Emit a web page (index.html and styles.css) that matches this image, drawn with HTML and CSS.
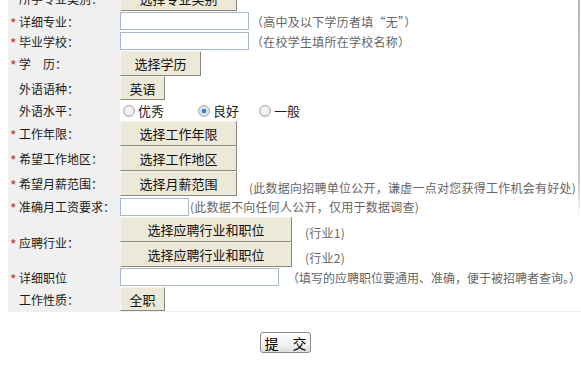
FILE: index.html
```html
<!DOCTYPE html>
<html lang="zh-CN">
<head>
  <meta charset="UTF-8">
  <title>求职意向</title>
  <link rel="stylesheet" href="styles.css">
</head>
<body>
  <div class="form">
    <div class="row h25">
      <div class="label"><span class="req">*</span>所学专业类别：</div>
      <div class="field"><button class="btn w117">选择专业类别</button></div>
    </div>
    <div class="row h20">
      <div class="label"><span class="req">*</span>详细专业：</div>
      <div class="field"><input type="text" class="txt w129"><span class="note">（高中及以下学历者填“无”）</span></div>
    </div>
    <div class="row h20">
      <div class="label"><span class="req">*</span>毕业学校：</div>
      <div class="field"><input type="text" class="txt w129"><span class="note">（在校学生填所在学校名称）</span></div>
    </div>
    <div class="row h25">
      <div class="label"><span class="req">*</span>学　历：</div>
      <div class="field"><button class="btn w81">选择学历</button></div>
    </div>
    <div class="row h24">
      <div class="label"><span class="req"></span>外语语种：</div>
      <div class="field"><button class="btn w45">英语</button></div>
    </div>
    <div class="row h21">
      <div class="label"><span class="req"></span>外语水平：</div>
      <div class="field radios">
        <label class="opt"><input type="radio" name="lv">优秀</label>
        <label class="opt"><input type="radio" name="lv" checked>良好</label>
        <label class="opt"><input type="radio" name="lv">一般</label>
      </div>
    </div>
    <div class="row h25">
      <div class="label"><span class="req">*</span>工作年限：</div>
      <div class="field"><button class="btn w117">选择工作年限</button></div>
    </div>
    <div class="row h25">
      <div class="label"><span class="req">*</span>希望工作地区：</div>
      <div class="field"><button class="btn w117">选择工作地区</button></div>
    </div>
    <div class="row h25">
      <div class="label"><span class="req">*</span>希望月薪范围：</div>
      <div class="field"><button class="btn w117">选择月薪范围</button><span class="note low">(此数据向招聘单位公开，谦虚一点对您获得工作机会有好处)</span></div>
    </div>
    <div class="row h21">
      <div class="label"><span class="req">*</span>准确月工资要求：</div>
      <div class="field"><input type="text" class="txt w69"><span class="note tight">(此数据不向任何人公开，仅用于数据调查)</span></div>
    </div>
    <div class="row h50">
      <div class="label"><span class="req">*</span>应聘行业：</div>
      <div class="field industry">
        <button class="btn w172">选择应聘行业和职位</button><span class="note">(行业1)</span>
        <button class="btn w172">选择应聘行业和职位</button><span class="note">(行业2)</span>
      </div>
    </div>
    <div class="row h20">
      <div class="label"><span class="req">*</span>详细职位</div>
      <div class="field"><input type="text" class="txt w159"><span class="note wide">（填写的应聘职位要通用、准确，便于被招聘者查询。）</span></div>
    </div>
    <div class="row h24">
      <div class="label"><span class="req"></span>工作性质：</div>
      <div class="field"><button class="btn w45">全职</button></div>
    </div>
  </div>
  <div class="actions">
    <button class="submit">提　交</button>
  </div>
</body>
</html>
```
FILE: styles.css
```css
body {
  margin: 0;
  background: #ffffff;
  font-family: "Noto Sans CJK SC", "Liberation Sans", sans-serif;
  font-size: 12px;
  color: #222;
  overflow: hidden;
}

.form {
  position: relative;
  margin: -14px 0 0 8px;
  width: 580px;
  border-bottom: 1px solid #eeeeee;
}

/* faint edge on the right, fades out towards the bottom */
.form::after {
  content: "";
  position: absolute;
  top: 0;
  left: 570px;
  width: 2px;
  height: 230px;
  background: linear-gradient(#b8b8b8, #c8c8c8 85%, rgba(255, 255, 255, 0));
}

.row {
  display: grid;
  grid-template-columns: 112px 1fr;
}

.h20 { height: 20px; }
.h21 { height: 21px; }
.h24 { height: 24px; }
.h25 { height: 25px; }
.h50 { height: 50px; }

.label {
  background: #f0f0f0;
  display: flex;
  align-items: center;
  padding-left: 2px;
  white-space: nowrap;
  color: #1a1a1a;
}

.req {
  display: inline-block;
  width: 9px;
  color: #c0303a;
  font-size: 14px;
  line-height: 12px;
  padding-top: 3px;
}

.field {
  display: flex;
  align-items: center;
  white-space: nowrap;
}

.btn {
  height: 100%;
  margin: 0;
  padding: 0;
  background: #ece9d8;
  border: 1px solid;
  border-color: #f4f2ea #8a887c #8a887c #f4f2ea;
  font-family: inherit;
  font-size: 13px;
  color: #111;
}

.w45 { width: 45px; }
.w81 { width: 81px; }
.w117 { width: 117px; }
.w172 { width: 172px; }

.txt {
  height: 18px;
  box-sizing: border-box;
  margin: 0;
  padding: 0 2px;
  border: 1px solid #a7b9cc;
  background: #fff;
}

.w69 { width: 69px; }
.w129 { width: 129px; }
.w159 { width: 159px; }

.note {
  color: #666;
  margin-left: 2px;
  font-size: 12px;
  letter-spacing: 0.25px;
}

.note.low {
  margin-left: 12px;
  padding-top: 8px;
}

.note.tight {
  margin-left: 1px;
}

.note.wide {
  margin-left: 8px;
  letter-spacing: 0;
}

.industry {
  display: grid;
  grid-template-columns: 172px auto;
  grid-template-rows: 25px 25px;
  align-items: center;
}

.industry .note {
  margin-left: 13px;
  padding-top: 6px;
}

.radios {
  padding-left: 3px;
}

.opt {
  display: flex;
  align-items: center;
  color: #222;
  font-size: 13px;
}

.opt:nth-child(1) { width: 75px; }
.opt:nth-child(2) { width: 61px; }

.opt input {
  appearance: none;
  width: 12px;
  height: 12px;
  margin: 0 3px 0 0;
  border: 1px solid #a9a9a9;
  border-radius: 50%;
  background: radial-gradient(circle at 50% 40%, #ffffff 0%, #e4e4e4 70%, #cfcfcf 100%);
}

.opt input:checked {
  background: radial-gradient(circle, #2a6fd0 0%, #4b8fe6 30%, #e8e8e8 38%, #d4d4d4 100%);
}

.actions {
  padding-top: 20px;
  padding-left: 260px;
}

.submit {
  width: 51px;
  height: 21px;
  padding: 0;
  background: linear-gradient(#ffffff, #f3f3f3 60%, #dcdcdc);
  border: 1px solid #8a8a8a;
  border-radius: 3px;
  font-family: inherit;
  font-size: 14px;
  color: #000;
}
```
